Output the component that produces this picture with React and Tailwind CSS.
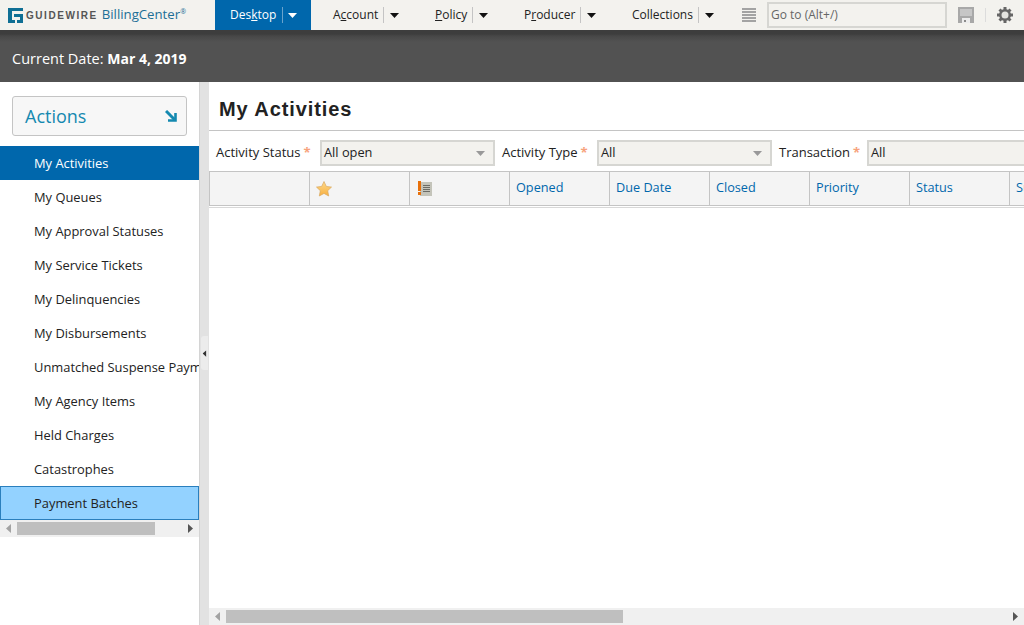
import React from 'react';

const navItems = [
  'My Activities',
  'My Queues',
  'My Approval Statuses',
  'My Service Tickets',
  'My Delinquencies',
  'My Disbursements',
  'Unmatched Suspense Payments',
  'My Agency Items',
  'Held Charges',
  'Catastrophes',
];

const Caret = ({ className }) => (
  <svg width="9" height="5" viewBox="0 0 9 5" className={className}>
    <path d="M0 0h9L4.5 5z" fill="currentColor" />
  </svg>
);

const SmallArrow = ({ dir, color, className }) => (
  <svg width="5" height="9" viewBox="0 0 5 9" className={className}>
    <path d={dir === 'left' ? 'M5 0v9L0 4.5z' : 'M0 0v9l5-4.5z'} fill={color} />
  </svg>
);

const Logo = () => (
  <svg width="15" height="15" viewBox="0 0 15 15" className="shrink-0">
    <path d="M0 0h15v3H4v9h3v3H0z" fill="#0f6f94" />
    <path d="M6 6h9v9H9v-3h3V9H6z" fill="#0f6f94" />
  </svg>
);

const MenuItem = ({ before = '', mark = '', after = '', textWidth }) => (
  <div className="flex items-center h-full">
    <span className={`${textWidth} text-[12px] text-[#222]`}>
      {before}
      <span className="underline">{mark}</span>
      {after}
    </span>
    <span className="w-px h-4 bg-[#c4c4c4]" />
    <Caret className="ml-[6px] text-[#111]" />
  </div>
);

const Select = ({ value, width, arrow = true }) => (
  <div className={`flex items-center justify-between h-[26px] border-2 border-[#d6d6d2] bg-[#f3f2ee] pl-[2px] pr-2 text-[12.8px] text-[#222] shrink-0 ${width}`}>
    <span>{value}</span>
    {arrow && <Caret className="text-[#999]" />}
  </div>
);

const Filter = ({ label, labelWidth }) => (
  <div className={`flex items-center shrink-0 text-[13px] text-[#222] ${labelWidth}`}>
    {label}
    <span className="ml-[3px] font-bold text-[#f7a27c]">*</span>
  </div>
);

const columns = ['Opened', 'Due Date', 'Closed', 'Priority', 'Status', 'Subject'];

export default function App() {
  return (
    <div className="flex flex-col w-[1024px] h-[625px] overflow-hidden bg-white font-['Open_Sans',sans-serif]">
      {/* top menu */}
      <div className="flex items-center h-[30px] bg-[#f3f2ee] shrink-0">
        <div className="flex items-center w-[215px] pl-2 shrink-0">
          <Logo />
          <span className="ml-[3px] font-['Liberation_Sans',sans-serif] font-bold text-[10px] tracking-[1.55px] text-[#555]">GUIDEWIRE</span>
          <span className="ml-[4px] text-[13.2px] text-[#1d6f96] leading-none">BillingCenter</span>
          <span className="text-[7px] text-[#1d6f96] self-start leading-none">®</span>
        </div>
        <div className="flex items-center h-full w-[96px] pl-[15px] bg-[#0067ac] text-white text-[12px] shrink-0">
          <span className="w-[52px]">Des<span className="underline">k</span>top</span>
          <span className="w-px h-4 bg-[#6aa3cc]" />
          <Caret className="ml-[5px]" />
        </div>
        <div className="flex h-full pl-[22px] shrink-0">
          <div className="w-[102px]"><MenuItem before="A" mark="c" after="count" textWidth="w-[50px]" /></div>
          <div className="w-[89px]"><MenuItem mark="P" after="olicy" textWidth="w-[37px]" /></div>
          <div className="w-[108px]"><MenuItem before="P" mark="r" after="oducer" textWidth="w-[56px]" /></div>
          <div className="w-[110px]"><MenuItem before="Collections" textWidth="w-[66px]" /></div>
        </div>
        <div className="flex flex-col gap-[1px] w-[14px] shrink-0">
          <span className="h-[2px] bg-[#a3a3a3]" />
          <span className="h-[2px] bg-[#a3a3a3]" />
          <span className="h-[2px] bg-[#a3a3a3]" />
          <span className="h-[2px] bg-[#a3a3a3]" />
          <span className="h-[2px] bg-[#a3a3a3]" />
        </div>
        <div className="flex items-center ml-[11px] w-[180px] h-[26px] border-2 border-[#d6d6d2] pl-[2px] text-[12px] text-[#666] shrink-0">Go to (Alt+/)</div>
        <svg width="16" height="16" viewBox="0 0 16 16" className="ml-[11px] shrink-0">
          <path d="M0 0h16v16H0z" fill="#a8a8a8" />
          <path d="M2 2h12v7H2z" fill="#c6c6c6" />
          <path d="M4 11h8v5H4z" fill="#ececec" />
          <path d="M6 13h2v2H6z" fill="#8a8a8a" />
        </svg>
        <span className="ml-[11px] w-px h-[14px] bg-[#dcdcdc] shrink-0" />
        <svg width="16" height="16" viewBox="0 0 16 16" className="ml-[11px] shrink-0">
          <path d="M8 0v16M0 8h16M2.500 2.500l11 11M13.500 2.500l-11 11" stroke="#666" strokeWidth="3" />
          <circle cx="8" cy="8" r="6" fill="#666" />
          <circle cx="8" cy="8" r="3.500" fill="#e4e4e0" />
        </svg>
      </div>

      {/* date band */}
      <div className="flex items-center h-[52px] pl-3 pt-[5px] shrink-0 bg-[linear-gradient(#3d3d3d_0,#3d3d3d_4px,#474747_6px,#525252_12px)] text-white">
        <span className="text-[14.5px]">Current Date:&nbsp;</span>
        <span className="text-[14px] font-bold">Mar 4, 2019</span>
      </div>

      <div className="flex flex-1 min-h-0">
        {/* sidebar */}
        <div className="flex flex-col w-[199px] shrink-0 overflow-hidden pt-[14px]">
          <div className="flex items-center justify-between h-10 mx-3 w-[175px] pl-3 pr-[9px] border border-[#c4c4c4] rounded-[3px] bg-[#f7f7f7] shrink-0">
            <span className="text-[18px] text-[#1489b0]">Actions</span>
            <svg width="12" height="12" viewBox="0 0 12 12">
              <path d="M1 1l8.500 8.500" stroke="#1489b0" strokeWidth="3" />
              <path d="M10.500 3v7.500H3" fill="none" stroke="#1489b0" strokeWidth="2.6" />
            </svg>
          </div>
          <div className="mt-[10px] flex flex-col">
            {navItems.map((item, i) => (
              <div
                key={item}
                className={`flex items-center h-[34px] pl-[34px] pt-[2px] text-[12.9px] whitespace-nowrap ${i === 0 ? 'bg-[#0067ac] text-white' : 'text-[#222]'}`}
              >
                {item}
              </div>
            ))}
            <div className="flex items-center h-[34px] pl-[33px] pt-[2px] border border-[#2a7fbd] bg-[#93d2ff] text-[12.9px] text-[#222]">
              Payment Batches
            </div>
          </div>
          <div className="flex items-center h-[17px] px-[6px] bg-[#f0f0f0] shrink-0">
            <SmallArrow dir="left" color="#a3a3a3" />
            <div className="h-[13px] w-[138px] ml-[6px] mr-auto bg-[#bfbfbf]" />
            <SmallArrow dir="right" color="#555" />
          </div>
        </div>

        {/* splitter */}
        <div className="relative w-[10px] shrink-0 bg-[#e2e2e2] border-l border-[#d4d4d4]">
          <div className="absolute top-[254px] left-[1px] flex items-center justify-center w-[7px] h-[34px] bg-[#ececec] rounded-l-[3px]">
            <SmallArrow dir="left" color="#333" className="scale-75" />
          </div>
        </div>

        {/* main */}
        <div className="flex flex-col flex-1 min-w-0 overflow-hidden">
          <div className="flex items-center h-[49px] pl-[10px] pt-[6px] border-b border-[#c4c4c4] shrink-0 font-['Liberation_Sans',sans-serif] font-bold text-[20px] tracking-[0.9px] text-[#222]">
            My Activities
          </div>
          <div className="flex items-center h-[40px] pl-[7px] pt-[4px] shrink-0">
            <Filter label="Activity Status" labelWidth="w-[104px]" />
            <Select value="All open" width="w-[175px]" />
            <Filter label="Activity Type" labelWidth="w-[95px] ml-[7px]" />
            <Select value="All" width="w-[175px]" />
            <Filter label="Transaction" labelWidth="w-[88px] ml-[7px]" />
            <Select value="All" width="w-[175px]" arrow={false} />
          </div>
          <div className="flex h-[35px] shrink-0 bg-[#f4f4f4] border-y border-[#c4c4c4]">
            <div className="w-[101px] border-x border-[#c4c4c4] shrink-0" />
            <div className="flex items-center w-[100px] pl-[6px] border-r border-[#c4c4c4] shrink-0">
              <svg width="16" height="16" viewBox="0 0 16 16">
                <defs>
                  <linearGradient id="star" x1="0" y1="0" x2="0" y2="1">
                    <stop offset="0" stopColor="#fdd98a" />
                    <stop offset="1" stopColor="#f8b040" />
                  </linearGradient>
                </defs>
                <path d="M8 .5l2.300 4.900 5.200.7-3.800 3.600 1 5.300L8 12.400 3.300 15l1-5.300L.5 6.100l5.200-.7z" fill="url(#star)" stroke="#d9a860" strokeWidth=".7" />
              </svg>
            </div>
            <div className="flex items-center w-[100px] pl-[8px] border-r border-[#c4c4c4] shrink-0">
              <svg width="14" height="15" viewBox="0 0 14 15">
                <path d="M2 1h12v14H2z" fill="#c4c4ba" />
                <path d="M5 4.500h7M5 6.500h7M5 8.500h7M5 10.500h7" stroke="#6c6c66" />
                <path d="M0 0h3v10H0zM0 11h3v3H0z" fill="#e8700a" />
              </svg>
            </div>
            {columns.map((col) => (
              <div key={col} className="flex items-center w-[100px] pl-[6px] pb-[2px] border-r border-[#c4c4c4] text-[12.7px] text-[#0067ac] whitespace-nowrap shrink-0">
                {col}
              </div>
            ))}
          </div>
          <div className="h-[1px] mt-[1px] bg-[#d8d8d8] shrink-0" />
          <div className="flex-1" />
          <div className="flex items-center justify-between h-[17px] px-[6px] bg-[#f0f0f0] shrink-0">
            <SmallArrow dir="left" color="#a3a3a3" />
            <div className="h-[13px] w-[397px] ml-[6px] mr-auto bg-[#bfbfbf]" />
            <SmallArrow dir="right" color="#555" />
          </div>
        </div>
      </div>
    </div>
  );
}
